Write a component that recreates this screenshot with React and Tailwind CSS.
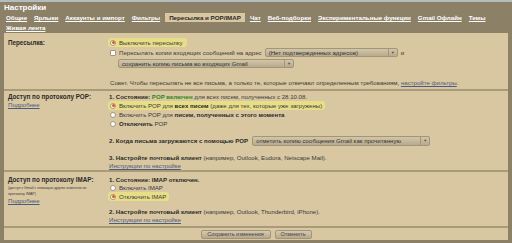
const tabs = ['Общие', 'Ярлыки', 'Аккаунты и импорт', 'Фильтры', 'Пересылка и POP/IMAP', 'Чат', 'Веб-подборки', 'Экспериментальные функции', 'Gmail Офлайн', 'Темы']

function Radio({ on }) {
    return (
        <span className="w-[6px] h-[6px] shrink-0 rounded-full bg-white border border-[#a09683] flex items-center justify-center">
            {on && <span className="w-[3px] h-[3px] rounded-full bg-[#e2561c]" />}
        </span>
    )
}

function Check() {
    return <span className="w-[6px] h-[6px] shrink-0 bg-white border border-[#a09683] rounded-[1px]" />
}

function Select({ children, className }) {
    return (
        <div className={`h-[9px] flex items-center justify-between rounded-[2px] border border-[#a2957a] bg-gradient-to-b from-[#d3c6a8] to-[#b7aa8d] text-[#333] pl-[3px] ${className}`}>
            <span>{children}</span>
            <span className="h-full w-[9px] border-l border-[#a2957a] flex items-center justify-center text-[4px] text-[#555]">▼</span>
        </div>
    )
}

function Link({ children }) {
    return <span className="underline text-[#4b5a7e]">{children}</span>
}

export default function App() {
    return (
        <div className="w-[512px] h-[243px] overflow-hidden bg-[#8c8067] border-t-2 border-[#b3bdc0] font-['Liberation_Sans',Arial,sans-serif] text-[6.1px] text-[#3a3a3a] flex flex-col">
            {/* header */}
            <div className="h-[11px] pl-[4px] text-[8px] leading-[11px] font-bold text-white">Настройки</div>
            <div className="pl-[6px] h-[9px] flex items-center gap-[7px] text-[6.2px] font-bold text-white whitespace-nowrap">
                {tabs.map(t => t === 'Пересылка и POP/IMAP'
                    ? <span key={t} className="h-[9px] shrink-0 flex items-center px-[4px] -mx-[2px] bg-[#d8c7a1] text-[#2a2a2a]">{t}</span>
                    : <span key={t} className="shrink-0 underline">{t}</span>)}
            </div>
            <div className="pl-[6px] h-[11px] flex items-center text-[6.2px] font-bold text-white underline">Живая лента</div>

            {/* panel */}
            <div className="mx-[4px] h-[207px] bg-[#d8c7a1] flex flex-col">
                {/* forwarding */}
                <div className="h-[58px] border-b-2 border-[#a99a79] flex pt-[5px]">
                    <div className="w-[104px] pl-[4px] h-[9px] flex items-center text-[6.3px] font-bold text-[#2a2a2a]">Пересылка:</div>
                    <div className="flex-1 flex flex-col">
                        <div className="h-[9px] flex items-center gap-[2px] self-start bg-[#e8de88] rounded-[3px] pl-[2px] pr-[4px]">
                            <Radio on /> <span className="ml-[1px]">Выключить пересылку</span>
                        </div>
                        <div className="h-[11px] flex items-center gap-[3px] pl-[2px]">
                            <Check />
                            <span>Пересылать копии входящих сообщений на адрес</span>
                            <Select className="w-[133px]">(Нет подтвержденных адресов)</Select>
                            <span>и</span>
                        </div>
                        <div className="h-[11px] flex items-center pl-[10px]">
                            <Select className="w-[176px]">сохранить копию письма во входящих Gmail</Select>
                        </div>
                        <div className="mt-[9px] h-[9px] flex items-center pl-[2px]">
                            <span>Совет. Чтобы пересылать не все письма, а только те, которые отвечают определенным требованиям, <Link>настройте фильтры</Link>.</span>
                        </div>
                    </div>
                </div>

                {/* POP */}
                <div className="h-[81px] border-b-2 border-[#a99a79] flex pt-[2px]">
                    <div className="w-[104px] pl-[4px] flex flex-col">
                        <div className="h-[8px] flex items-center text-[6.3px] font-bold text-[#2a2a2a]">Доступ по протоколу POP:</div>
                        <div className="h-[8px] flex items-center"><Link>Подробнее</Link></div>
                    </div>
                    <div className="flex-1 flex flex-col">
                        <div className="h-[8px] flex items-center pl-[1px]">
                            <span><b className="text-[#2a2a2a]">1. Состояние: </b><b className="text-[#2d8a1c]">POP включен</b> для всех писем, полученных с 28.10.08.</span>
                        </div>
                        <div className="h-[9px] flex items-center gap-[3px] self-start bg-[#e8de88] rounded-[3px] pl-[2px] pr-[3px]">
                            <Radio on /><span>Включить POP для <b className="text-[#2a2a2a]">всех писем</b> (даже для тех, которые уже загружены)</span>
                        </div>
                        <div className="h-[9px] flex items-center gap-[3px] pl-[2px]">
                            <Radio /><span>Включить POP для <b className="text-[#2a2a2a]">писем, полученных с этого момента</b></span>
                        </div>
                        <div className="h-[9px] flex items-center gap-[3px] pl-[2px]">
                            <Radio /><span><b className="text-[#2a2a2a]">Отключить</b> POP</span>
                        </div>
                        <div className="mt-[8px] h-[10px] flex items-center gap-[4px] pl-[1px]">
                            <b className="text-[#2a2a2a]">2. Когда письма загружаются с помощью POP</b>
                            <Select className="w-[178px] h-[10px]">отметить копию сообщения Gmail как прочитанную</Select>
                        </div>
                        <div className="mt-[8px] h-[8px] flex items-center pl-[1px]">
                            <span><b className="text-[#2a2a2a]">3. Настройте почтовый клиент</b> (например, Outlook, Eudora, Netscape Mail).</span>
                        </div>
                        <div className="h-[7px] flex items-center pl-[1px]"><Link>Инструкции по настройке</Link></div>
                    </div>
                </div>

                {/* IMAP */}
                <div className="h-[56px] border-b-2 border-[#a99a79] flex pt-[4px]">
                    <div className="w-[104px] pl-[4px] flex flex-col">
                        <div className="h-[8px] flex items-center text-[6.3px] font-bold text-[#2a2a2a]">Доступ по протоколу IMAP:</div>
                        <div className="text-[3.6px] leading-[6px] pr-[4px] pt-[1px]">(доступ к Gmail с помощью других клиентов по протоколу IMAP)</div>
                        <div className="h-[8px] flex items-center"><Link>Подробнее</Link></div>
                    </div>
                    <div className="flex-1 flex flex-col">
                        <div className="h-[8px] flex items-center pl-[1px]">
                            <b className="text-[#2a2a2a]">1. Состояние: IMAP отключен.</b>
                        </div>
                        <div className="h-[8px] flex items-center gap-[3px] pl-[2px]">
                            <Radio /><span>Включить IMAP</span>
                        </div>
                        <div className="h-[9px] flex items-center gap-[3px] self-start bg-[#e8de88] rounded-[3px] pl-[2px] pr-[3px]">
                            <Radio on /><span>Отключить IMAP</span>
                        </div>
                        <div className="mt-[7px] h-[8px] flex items-center pl-[1px]">
                            <span><b className="text-[#2a2a2a]">2. Настройте почтовый клиент</b> (например, Outlook, Thunderbird, iPhone).</span>
                        </div>
                        <div className="h-[7px] flex items-center pl-[1px]"><Link>Инструкции по настройке</Link></div>
                    </div>
                </div>

                {/* buttons */}
                <div className="flex-1 flex items-center justify-center gap-[4px]">
                    <button className="h-[9px] w-[70px] rounded-[2px] border border-[#a2957a] bg-gradient-to-b from-[#d6cab0] to-[#b5a88c] text-[5.5px] text-[#444] flex items-center justify-center">Сохранить изменения</button>
                    <button className="h-[9px] w-[37px] rounded-[2px] border border-[#a2957a] bg-gradient-to-b from-[#d6cab0] to-[#b5a88c] text-[5.5px] text-[#444] flex items-center justify-center">Отменить</button>
                </div>
            </div>
        </div>
    )
}
